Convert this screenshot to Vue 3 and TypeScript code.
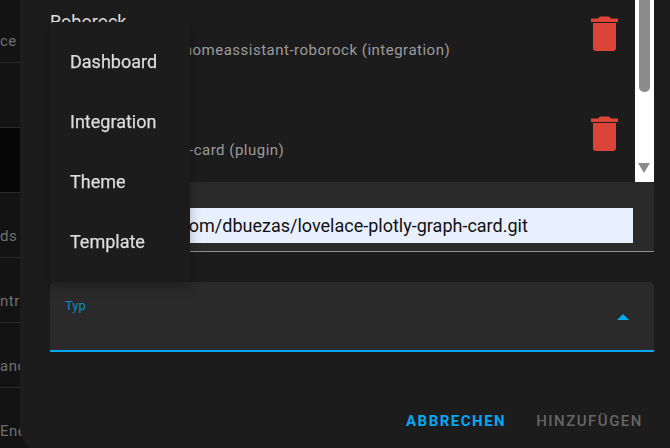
<script setup lang="ts">
const menu: string[] = ['Dashboard', 'Integration', 'Theme', 'Template']
const sideRows = [
  { text: 'ce U', cls: '' },
  { text: '', cls: '' },
  { text: '', cls: 'black' },
  { text: 'ds', cls: '' },
  { text: 'ntrol', cls: '' },
  { text: 'and', cls: '' },
  { text: 'Energy', cls: 'last' },
]
const repos = [
  { name: 'Roborock', sub: 'humbertogontijon/homeassistant-roborock (integration)' },
  { name: 'Vacuum Card', sub: 'denysdovh/vacuum-card (plugin)' },
]
</script>

<template>
  <div class="screen">
    <aside class="side">
      <div v-for="(r, i) in sideRows" :key="i" class="side-row" :class="r.cls">
        <span>{{ r.text }}</span>
      </div>
    </aside>
    <section class="dialog">
      <div class="list-wrap">
        <div class="list">
          <div v-for="r in repos" :key="r.name" class="repo">
            <div class="repo-text">
              <div class="repo-name">{{ r.name }}</div>
              <div class="repo-sub">{{ r.sub }}</div>
            </div>
            <svg class="trash" viewBox="0 0 27 35" width="27" height="35">
              <path d="M2 7h23v25a3 3 0 0 1-3 3H5a3 3 0 0 1-3-3z" fill="#db4437" />
              <path d="M0 2.500h7L9 .5h9l2 2h7V6H0z" fill="#db4437" />
            </svg>
          </div>
        </div>
        <div class="scrollbar">
          <div class="thumb"></div>
          <div class="arrow"></div>
        </div>
      </div>
      <div class="field url">
        <div class="input">https://github.com/dbuezas/lovelace-plotly-graph-card.git</div>
      </div>
      <div class="field select">
        <span class="label">Typ</span>
        <span class="caret"></span>
      </div>
      <div class="actions">
        <span class="btn primary">ABBRECHEN</span>
        <span class="btn disabled">HINZUFÜGEN</span>
      </div>
    </section>
    <ul class="menu">
      <li v-for="m in menu" :key="m">{{ m }}</li>
    </ul>
  </div>
</template>

<style scoped>
.screen {
  position: relative;
  display: flex;
  width: 670px;
  height: 448px;
  overflow: hidden;
  background: #131313;
  font-family: Roboto, "Liberation Sans", sans-serif;
}
.side {
  width: 30px;
  flex: none;
  margin-top: -2px;
  margin-right: -10px;
}
.side-row {
  box-sizing: border-box;
  height: 65px;
  padding-top: 33px;
  border-bottom: 1px solid #2a2a2a;
  color: #707070;
  font-size: 15px;
  line-height: 20px;
  letter-spacing: 0.5px;
  white-space: nowrap;
  overflow: hidden;
}
.side-row.black { background: #060606; }
.side-row.last { border-bottom: 0; }
.dialog {
  position: relative;
  z-index: 1;
  flex: none;
  width: 650px;
  height: 455px;
  box-sizing: border-box;
  display: flex;
  flex-direction: column;
  padding-left: 30px;
  padding-right: 16px;
  background: #1c1c1c;
  border-bottom-left-radius: 28px;
}
.list-wrap {
  display: flex;
  height: 182px;
}
.list {
  flex: 1;
  overflow: hidden;
}
.repo {
  display: flex;
  justify-content: space-between;
  height: 100px;
  padding-right: 17px;
}
.repo-text { margin-top: 10px; }
.repo-name {
  color: #e1e1e1;
  font-size: 18px;
  line-height: 24px;
}
.repo-sub {
  color: #9b9b9b;
  font-size: 15px;
  line-height: 20px;
  letter-spacing: 0.5px;
  margin-top: 6px;
}
.trash { margin-top: 16px; }
.scrollbar {
  position: relative;
  width: 19px;
  flex: none;
  background: #fff;
}
.thumb {
  width: 11px;
  height: 92px;
  margin-left: 4px;
  background: #8c8c8c;
  border-radius: 0 0 5px 5px;
}
.arrow {
  position: absolute;
  left: 3px;
  top: 163px;
  width: 0;
  height: 0;
  border-left: 6.5px solid transparent;
  border-right: 6.5px solid transparent;
  border-top: 10px solid #8c8c8c;
}
.field { flex: none; background: #2a2a2a; }
.url {
  height: 70px;
  box-sizing: border-box;
  padding: 26px 21px 0 0;
  border-bottom: 1px solid #8e8e8e;
  border-top-right-radius: 4px;
}
.input {
  box-sizing: border-box;
  height: 35px;
  background: #e8f0fe;
  color: #111;
  font-size: 18px;
  line-height: 36px;
  padding-left: 16px;
  white-space: nowrap;
  overflow: hidden;
}
.select {
  position: relative;
  height: 70px;
  margin-top: 30px;
  box-sizing: border-box;
  border-bottom: 2px solid #03a9f4;
  border-radius: 5px 5px 0 0;
}
.label {
  position: absolute;
  left: 15px;
  top: 16px;
  font-size: 13px;
  line-height: 16px;
  color: #0a8ac6;
}
.caret {
  position: absolute;
  right: 25px;
  top: 32px;
  width: 0;
  height: 0;
  border-left: 6px solid transparent;
  border-right: 6px solid transparent;
  border-bottom: 6px solid #03a9f4;
}
.actions {
  display: flex;
  justify-content: flex-end;
  gap: 30px;
  padding: 60px 11px 0 0;
}
.btn {
  font-size: 15px;
  font-weight: 500;
  line-height: 18px;
  letter-spacing: 1.5px;
}
.primary { color: #03a9f4; font-weight: 700; }
.disabled { color: #666; }
.menu {
  position: absolute;
  z-index: 2;
  left: 50px;
  top: 22px;
  width: 140px;
  height: 260px;
  box-sizing: border-box;
  margin: 0;
  padding: 10px 0 0;
  list-style: none;
  background: #1c1c1c;
  border-radius: 4px;
  box-shadow: 0 5px 12px rgba(0, 0, 0, 0.28);
  transform: translateZ(0);
}
.menu li {
  height: 60px;
  padding-left: 20px;
  color: #dcdcdc;
  font-size: 18px;
  line-height: 60px;
  -webkit-text-stroke: 0.25px #dcdcdc;
}
</style>
